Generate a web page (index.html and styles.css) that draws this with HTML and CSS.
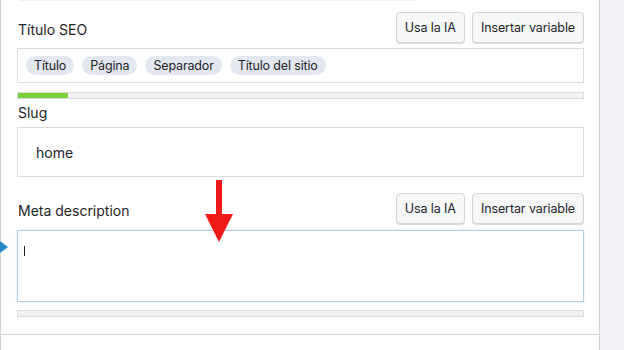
FILE: index.html
```html
<!DOCTYPE html>
<html lang="es">
<head>
    <meta charset="UTF-8">
    <meta name="viewport" content="width=device-width, initial-scale=1.0">
    <title>Ajustes SEO</title>
    <link rel="stylesheet" href="styles.css">
</head>
<body>
    <div class="page">
        <div class="panel">
            <div class="panel-top"></div>
            <div class="section">
                <div class="field-head">
                    <label class="field-label">Título SEO</label>
                    <div class="actions">
                        <button class="btn">Usa la IA</button>
                        <button class="btn">Insertar variable</button>
                    </div>
                </div>
                <div class="tag-input">
                    <span class="tag">Título</span>
                    <span class="tag">Página</span>
                    <span class="tag">Separador</span>
                    <span class="tag">Título del sitio</span>
                </div>
                <div class="meter"><div class="meter-fill" style="width: 50px;"></div></div>

                <label class="field-label slug-label">Slug</label>
                <div class="text-input">home</div>

                <div class="field-head meta-head">
                    <label class="field-label">Meta description</label>
                    <div class="actions">
                        <button class="btn">Usa la IA</button>
                        <button class="btn">Insertar variable</button>
                    </div>
                </div>
                <div class="textarea-wrap">
                    <span class="pointer"></span>
                    <div class="textarea"><span class="caret"></span></div>
                </div>
                <div class="meter"></div>
            </div>
        </div>

        <!-- annotation arrow -->
        <svg class="arrow" width="28" height="62" viewBox="0 0 28 62">
            <rect x="11" y="0" width="6" height="36" fill="#ee1a1a"/>
            <polygon points="0,34 28,34 14,62" fill="#ee1a1a"/>
        </svg>
    </div>
</body>
</html>
```

FILE: styles.css
```css
* {
    box-sizing: border-box;
}
body {
    margin: 0;
    font-family: "Inter", "Liberation Sans", sans-serif;
    background: #f0f2f6;
    color: #1d2327;
}
.page {
    position: relative;
    width: 624px;
    height: 350px;
    overflow: hidden;
}
.panel {
    width: 600px;
    height: 350px;
    background: #fff;
    border-left: 1px solid #d4d4d6;
    border-right: 1px solid #d4d4d6;
}
.panel-top {
    height: 1px;
    width: 395px;
    margin-left: 18px;
    background: #f0f0f1;
}
.section {
    padding: 0 15px 17px 16px;
    border-bottom: 1px solid #d4d4d6;
}
.field-head {
    display: flex;
    justify-content: space-between;
    align-items: flex-end;
    margin-top: 11px;
}
.field-label {
    display: block;
    font-size: 14px;
    line-height: 20px;
    padding-left: 1px;
    padding-bottom: 3px;
}
.actions {
    display: flex;
    gap: 7px;
}
.btn {
    height: 31px;
    padding: 0 8px;
    font-family: inherit;
    font-size: 12.5px;
    letter-spacing: -0.1px;
    color: #1d2327;
    background: #f6f7f7;
    border: 1px solid #d6d6d8;
    border-radius: 4px;
    box-shadow: 0 1px 0 #dcdcde;
}
.tag-input {
    display: flex;
    align-items: center;
    gap: 8px;
    height: 35px;
    margin-top: 5px;
    padding: 0 8px;
    border: 1px solid #dcdcde;
}
.tag {
    height: 19px;
    line-height: 19px;
    padding: 0 8px;
    font-size: 12.5px;
    letter-spacing: -0.15px;
    background: #e3e8f0;
    border-radius: 10px;
}
.meter {
    height: 7px;
    margin-top: 9px;
    border: 1px solid #dcdcde;
    background: #f2f2f2;
}
.meter-fill {
    height: 5px;
    background: #7ad03a;
}
.slug-label {
    margin-top: 4px;
    padding-bottom: 0;
}
.text-input {
    height: 50px;
    margin-top: 4px;
    padding-left: 18px;
    display: flex;
    align-items: center;
    font-size: 14px;
    border: 1px solid #dcdcde;
}
.meta-head {
    margin-top: 16px;
}
.textarea-wrap {
    position: relative;
    margin-top: 6px;
}
.textarea {
    height: 72px;
    padding: 15px 6px;
    border: 1px solid #b3cde3;
    box-shadow: 0 0 2px rgba(114, 170, 220, 0.35);
}
.caret {
    display: block;
    width: 1px;
    height: 10px;
    background: #1d2327;
}
.textarea-wrap + .meter {
    margin-top: 8px;
}
.pointer {
    position: absolute;
    left: -17px;
    top: 11px;
    border-left: 8px solid #2488c2;
    border-top: 6px solid transparent;
    border-bottom: 6px solid transparent;
}
.arrow {
    position: absolute;
    left: 205px;
    top: 180px;
}
```
